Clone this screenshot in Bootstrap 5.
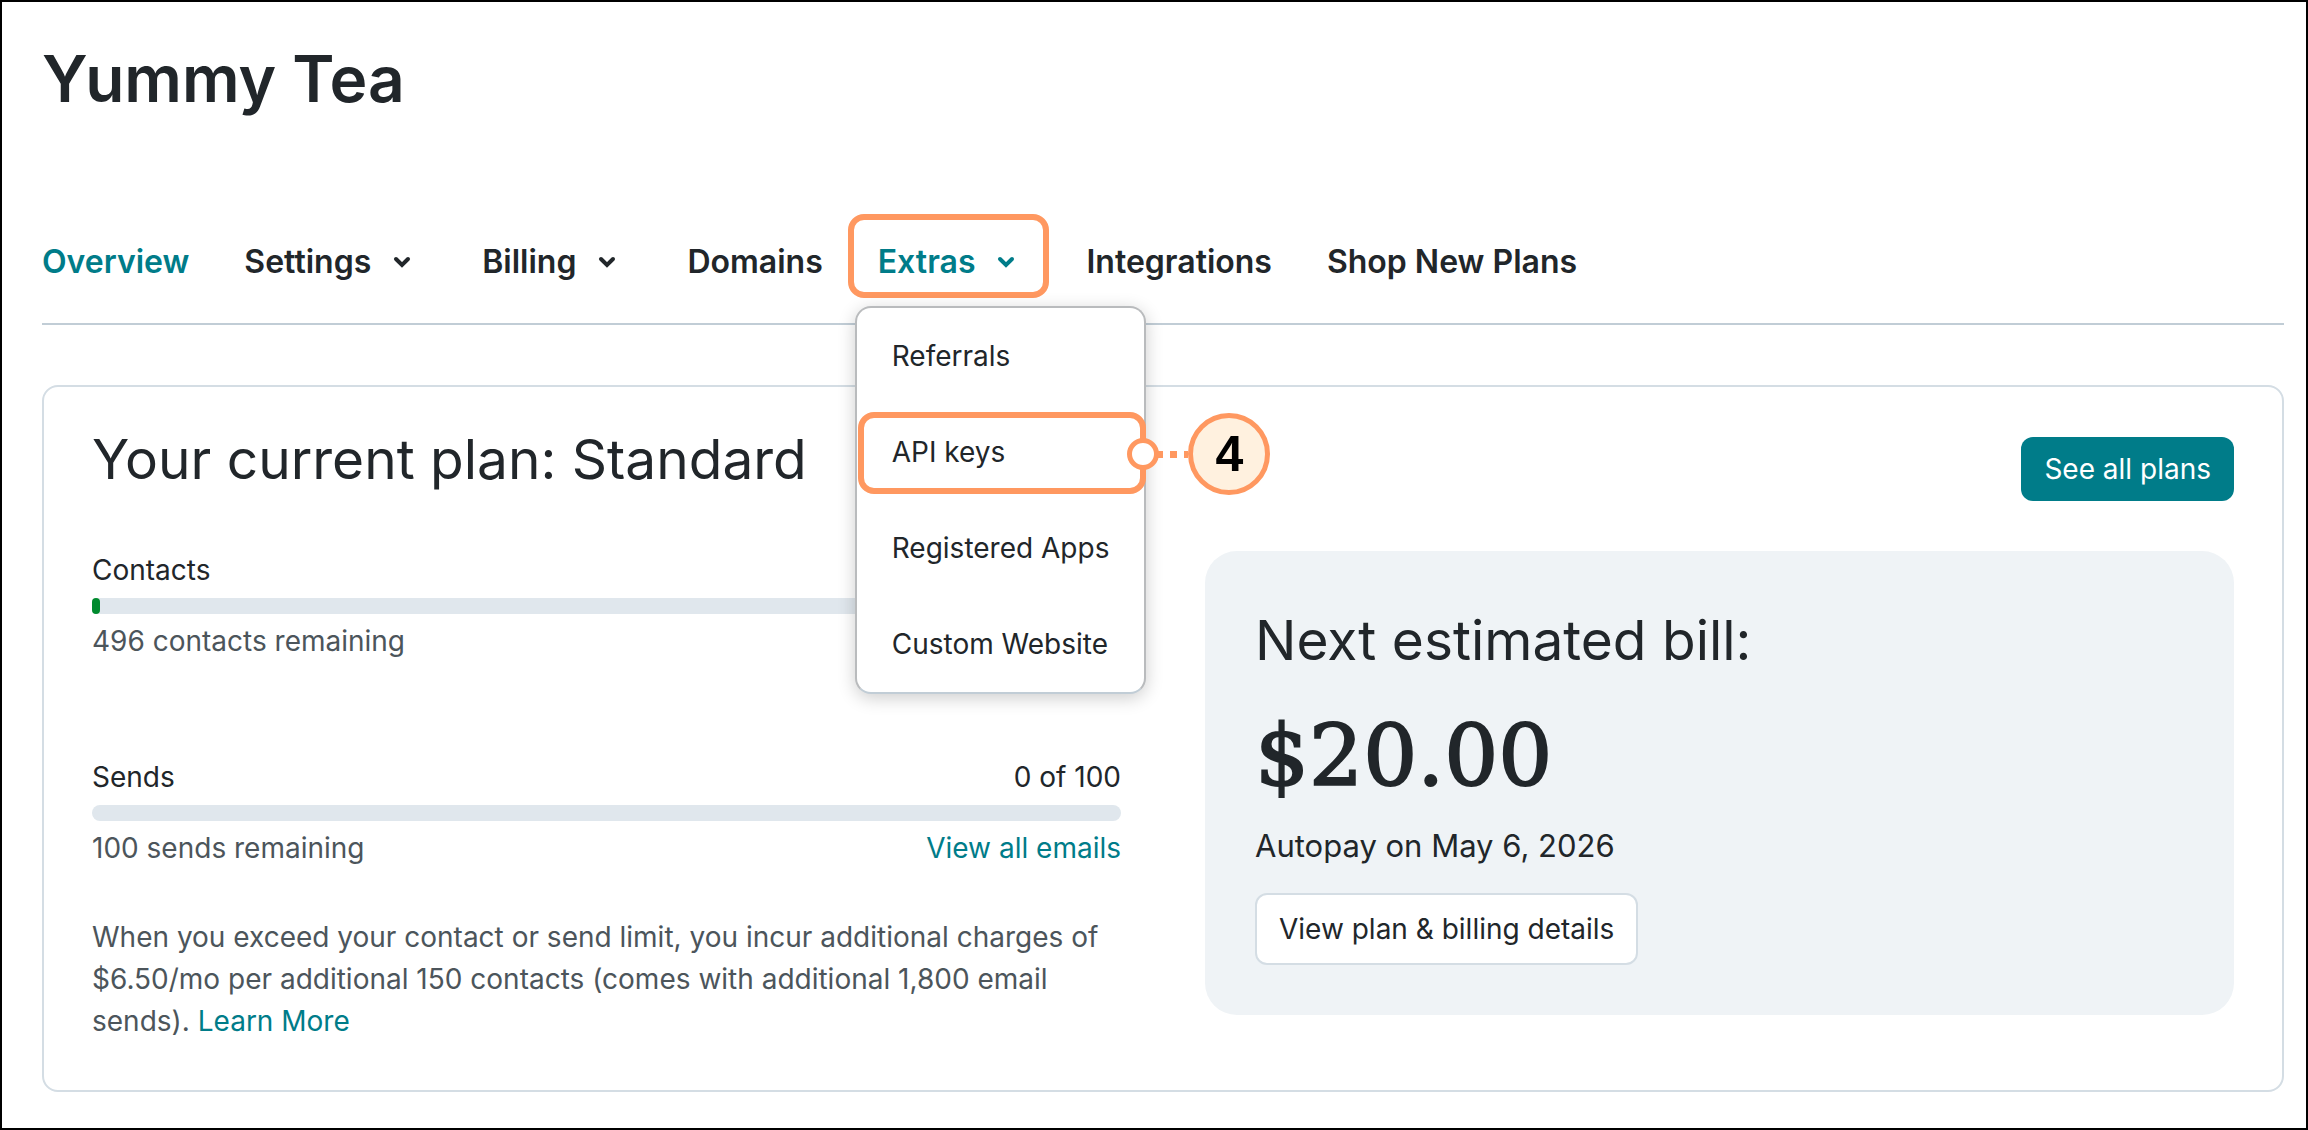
<!DOCTYPE html>
<html lang="en">
<head>
<meta charset="utf-8">
<meta name="viewport" content="width=device-width, initial-scale=1">
<title>Yummy Tea – Account overview</title>
<link href="https://cdn.jsdelivr.net/npm/bootstrap@5.3.0/dist/css/bootstrap.min.css" rel="stylesheet">
<style>
  :root { --ink:#21262a; --muted-ink:#4c555b; --teal:#007c89; --line:#d4dde4; --hl:#ff9860; }
  body { font-family:Inter, "Liberation Sans", sans-serif; color:var(--ink); font-size:28px; line-height:42px; background:#fff; min-height:100vh; border:2px solid #000; }
  a { color:var(--teal); text-decoration:none; }
  .page { padding:37px 22px 36px 40px; }
  .store-name { font-size:64px; line-height:80px; font-weight:600; margin:0 0 123px; }

  .tabs { gap:55px; padding-bottom:41px; border-bottom:2px solid #c1cdd6; margin-bottom:60px; font-size:32px; line-height:40px; font-weight:600; }
  .tabs .nav-link { padding:0; color:var(--ink); display:flex; align-items:center; }
  .tabs .nav-link.active { color:var(--teal); }
  .tabs button.nav-link { padding-right:16px; line-height:40px; font-weight:600; }
  .chev { width:18px; height:18px; margin-left:22px; fill:none; stroke:currentColor; stroke-width:4; stroke-linecap:round; }
  .ring { position:absolute; border:6px solid var(--hl); border-radius:16px; pointer-events:none; }
  .tab-ring { inset:-28px -18px -16px -30px; }
  .drop { position:absolute; display:block; top:64px; left:-23px; z-index:5; padding:0; margin:0; min-width:0; border:2px solid #b9bbbd; border-bottom-color:#c1cdd6; border-radius:16px; box-shadow:0 4px 18px rgba(0,0,0,.2); font-size:28px; background:#fff; }
  .drop .dropdown-item { padding:0 35px; line-height:96px; color:var(--ink); font-weight:400; }
  .item-ring { inset:8px -2px 6px 1px; }
  .step { position:absolute; left:100%; top:9px; margin-left:-17px; }
  .step-dot { width:32px; height:32px; border:5px solid var(--hl); border-radius:50%; background:#fff; }
  .step-line { width:32px; height:7px; background:repeating-linear-gradient(90deg, var(--hl) 0 7px, transparent 7px 14px); margin-left:-3px; }
  .step-num { width:82px; height:82px; border:5px solid var(--hl); border-radius:50%; background:#fff1df; color:#000; font-family:"Liberation Sans", sans-serif; font-size:50px; line-height:50px; font-weight:700; }

  .plan { border:2px solid var(--line); border-radius:16px; padding:50px 48px 48px; }
  .plan-head { margin-bottom:50px; }
  .title-lg { font-size:55px; font-weight:400; margin:0; }
  .plan-head .title-lg { line-height:44px; }
  .btn-teal { background:var(--teal); color:#fff; border:0; border-radius:12px; font-size:28px; line-height:42px; padding:11px 23px; }
  .plan-cols { display:grid; grid-template-columns:1fr 1fr; gap:84px; align-items:start; }
  .meter-label { line-height:38px; margin-bottom:9px; }
  .meter { height:16px; border-radius:8px; background:#e0e7ed; margin-bottom:6px; overflow:visible; }
  .meter .progress-bar { background:#008a2e; border-radius:4px; }
  .soft { color:var(--muted-ink); }
  .usage-gap { margin-bottom:96px; }
  .note { margin:47px 0 0; }
  .bill { background:#eff3f6; border-radius:32px; padding:57px 50px 50px; }
  .bill .title-lg { line-height:64px; }
  .amount { font-family:"DejaVu Serif", serif; font-size:85px; line-height:96px; margin:36px 0 18px; -webkit-text-stroke:2px currentColor; }
  .autopay { font-size:31px; line-height:48px; margin-bottom:23px; }
  .btn-line { background:#fff; color:var(--ink); border:2px solid var(--line); border-radius:12px; font-size:28px; line-height:42px; padding:13px 22px; }
</style>
</head>
<body>
<div class="page">
  <h1 class="store-name">Yummy Tea</h1>

  <nav aria-label="Account">
    <ul class="nav tabs">
      <li class="nav-item"><a class="nav-link active" href="#">Overview</a></li>
      <li class="nav-item"><button type="button" class="nav-link border-0 bg-transparent">Settings
        <svg class="chev" viewBox="0 0 18 18" aria-hidden="true"><path d="M3 6 9 12 15 6"/></svg></button></li>
      <li class="nav-item"><button type="button" class="nav-link border-0 bg-transparent">Billing
        <svg class="chev" viewBox="0 0 18 18" aria-hidden="true"><path d="M3 6 9 12 15 6"/></svg></button></li>
      <li class="nav-item"><a class="nav-link" href="#">Domains</a></li>
      <li class="nav-item position-relative">
        <button type="button" class="nav-link active border-0 bg-transparent" aria-expanded="true">Extras
          <svg class="chev" viewBox="0 0 18 18" aria-hidden="true"><path d="M3 6 9 12 15 6"/></svg></button>
        <span class="ring tab-ring"></span>
        <ul class="drop list-unstyled">
          <li><a class="dropdown-item bg-transparent" href="#">Referrals</a></li>
          <li class="position-relative">
            <a class="dropdown-item bg-transparent" href="#">API keys</a>
            <span class="ring item-ring"></span>
            <span class="step d-flex align-items-center">
              <span class="step-dot flex-shrink-0"></span>
              <span class="step-line flex-shrink-0"></span>
              <span class="step-num flex-shrink-0 d-flex align-items-center justify-content-center">4</span>
            </span>
          </li>
          <li><a class="dropdown-item bg-transparent" href="#">Registered Apps</a></li>
          <li><a class="dropdown-item bg-transparent" href="#">Custom Website</a></li>
        </ul>
      </li>
      <li class="nav-item"><a class="nav-link" href="#">Integrations</a></li>
      <li class="nav-item"><a class="nav-link" href="#">Shop New Plans</a></li>
    </ul>
  </nav>

  <section class="plan">
    <div class="plan-head d-flex justify-content-between align-items-start">
      <h2 class="title-lg">Your current plan: Standard</h2>
      <button type="button" class="btn btn-teal">See all plans</button>
    </div>
    <div class="plan-cols">
      <div>
        <div class="usage-gap">
          <div class="meter-label">Contacts</div>
          <div class="progress meter" role="progressbar" aria-label="Contacts" aria-valuenow="4" aria-valuemin="0" aria-valuemax="500"><div class="progress-bar" style="width:0.8%"></div></div>
          <div class="soft">496 contacts remaining</div>
        </div>
        <div class="meter-label d-flex justify-content-between"><span>Sends</span><span>0 of 100</span></div>
        <div class="progress meter" role="progressbar" aria-label="Sends" aria-valuenow="0" aria-valuemin="0" aria-valuemax="100"></div>
        <div class="d-flex justify-content-between"><span class="soft">100 sends remaining</span><a href="#">View all emails</a></div>
        <p class="note soft">When you exceed your contact or send limit, you incur additional charges of $6.50/mo per additional 150 contacts (comes with additional 1,800 email sends). <a href="#">Learn More</a></p>
      </div>
      <div class="bill">
        <h2 class="title-lg">Next estimated bill:</h2>
        <div class="amount">$20.00</div>
        <div class="autopay">Autopay on May 6, 2026</div>
        <button type="button" class="btn btn-line">View plan &amp; billing details</button>
      </div>
    </div>
  </section>
</div>
<script src="https://cdn.jsdelivr.net/npm/bootstrap@5.3.0/dist/js/bootstrap.bundle.min.js"></script>
</body>
</html>
